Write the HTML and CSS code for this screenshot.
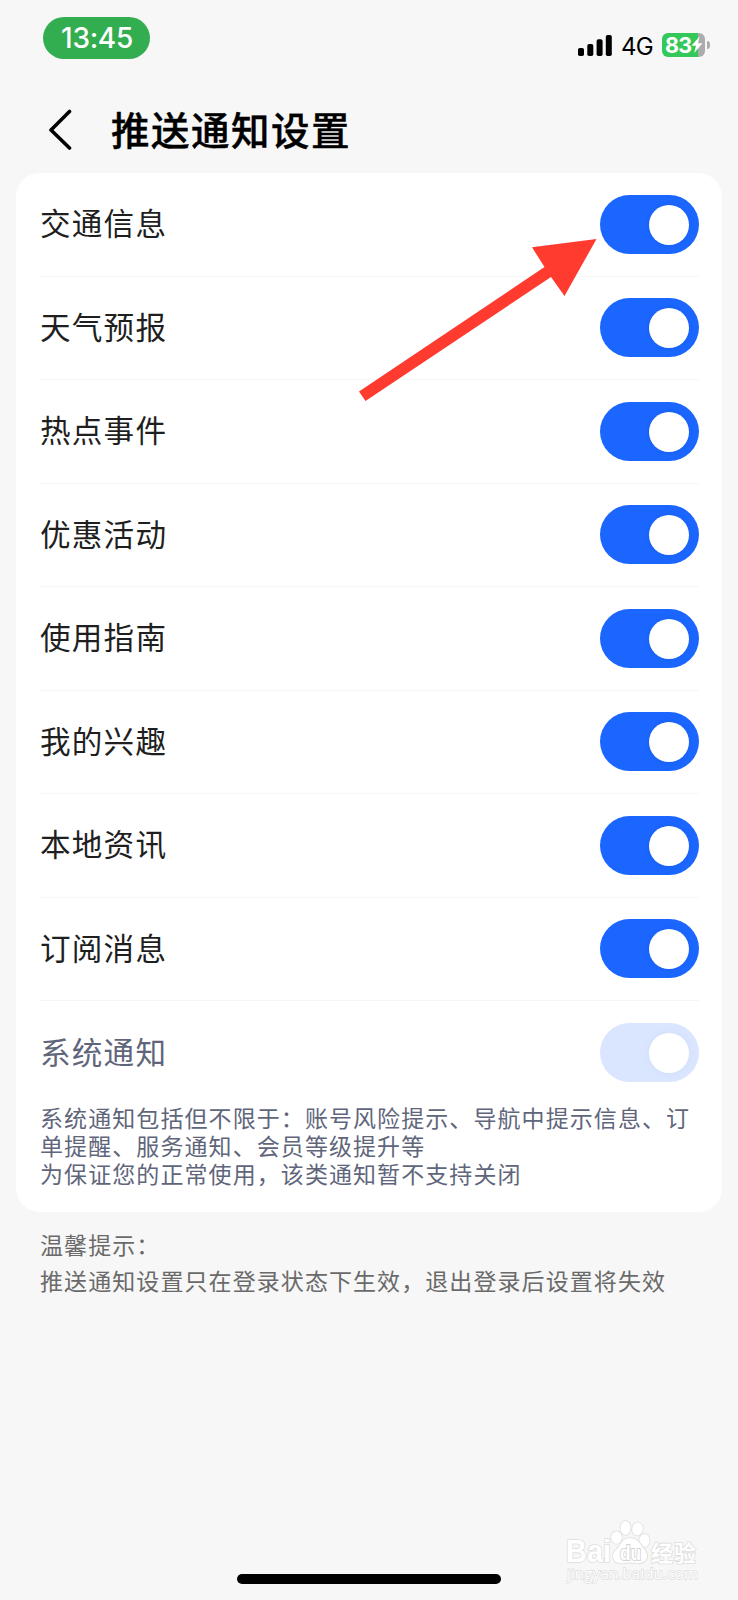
FILE: index.html
```html
<!DOCTYPE html>
<html lang="zh-CN">
<head>
    <meta charset="UTF-8">
    <meta name="viewport" content="width=device-width, initial-scale=1.0">
    <title>推送通知设置</title>
    <link rel="stylesheet" href="styles.css">
</head>
<body>
    <div class="status-bar">
        <div class="time">13:45</div>
        <div class="status-right">
            <svg class="signal" width="34" height="22" viewBox="0 0 34 22">
                <rect x="0" y="13" width="6" height="8" rx="1.8"/>
                <rect x="9.3" y="9" width="6" height="12" rx="1.8"/>
                <rect x="18.6" y="4.3" width="6" height="16.7" rx="1.8"/>
                <rect x="27.8" y="0" width="6" height="21" rx="1.8"/>
            </svg>
            <span class="network">4G</span>
            <div class="battery">
                <span class="battery-level">83</span>
                <svg class="bolt" width="12" height="18" viewBox="0 0 12 18">
                    <path d="M8.5 0.5 L0.5 9.7 H5 L3.2 17 L11.5 7.3 H7 Z"/>
                </svg>
            </div>
            <div class="battery-cap"></div>
        </div>
    </div>

    <div class="header">
        <svg class="back" width="24" height="42" viewBox="0 0 24 42">
            <path d="M21.5 2.5 L3 21 L21.5 39"/>
        </svg>
        <h1>推送通知设置</h1>
    </div>

    <!-- Notification list -->
    <div class="card">
        <div class="row"><span>交通信息</span><div class="switch"></div></div>
        <div class="row"><span>天气预报</span><div class="switch"></div></div>
        <div class="row"><span>热点事件</span><div class="switch"></div></div>
        <div class="row"><span>优惠活动</span><div class="switch"></div></div>
        <div class="row"><span>使用指南</span><div class="switch"></div></div>
        <div class="row"><span>我的兴趣</span><div class="switch"></div></div>
        <div class="row"><span>本地资讯</span><div class="switch"></div></div>
        <div class="row"><span>订阅消息</span><div class="switch"></div></div>
        <div class="row disabled"><span>系统通知</span><div class="switch"></div></div>
        <p class="desc">系统通知包括但不限于：账号风险提示、导航中提示信息、订单提醒、服务通知、会员等级提升等<br>为保证您的正常使用，该类通知暂不支持关闭</p>
    </div>

    <p class="tips">温馨提示：<br>推送通知设置只在登录状态下生效，退出登录后设置将失效</p>

    <!-- Arrow over the list -->
    <svg class="arrow" width="240" height="164" viewBox="0 0 240 164">
        <path d="M238.5 1 L174 9.3 L186.5 29 L1 153.5 L7.5 163 L193 39 L206.5 58 Z"/>
    </svg>

    <!-- Watermark -->
    <svg class="watermark" width="140" height="68" viewBox="0 0 140 68">
        <g class="mark">
            <text class="bai" x="0" y="45" textLength="45" lengthAdjust="spacingAndGlyphs">Bai</text>
            <ellipse cx="50.5" cy="20.5" rx="5.3" ry="6.3"/>
            <ellipse cx="59.5" cy="11" rx="5" ry="7"/>
            <ellipse cx="71.5" cy="12" rx="5.3" ry="6.6" transform="rotate(10 71.5 12)"/>
            <ellipse cx="78.5" cy="23.5" rx="5.2" ry="6.4"/>
            <path d="M64 21 C56 21 55 28 50 33 C44 39 48 46.5 55 46 C61 45.5 66 45.5 72 46 C80 47 84 39 79 33 C74 28 73 21 64 21 Z"/>
            <text class="du" x="54" y="42.5" textLength="21" lengthAdjust="spacingAndGlyphs">du</text>
            <text class="jy" x="85" y="43.5" textLength="45">经验</text>
            <text class="url" x="1" y="62" textLength="131" lengthAdjust="spacingAndGlyphs">jingyan.baidu.com</text>
        </g>
    </svg>

    <div class="home-bar"></div>
</body>
</html>
```

FILE: styles.css
```css
* {
    box-sizing: border-box;
}

body {
    position: relative;
    display: flex;
    flex-direction: column;
    margin: 0;
    height: 1600px;
    overflow: hidden;
    font-family: "Noto Sans CJK SC", sans-serif;
    background: #f7f7f7;
    color: #1f1f1f;
}

.status-bar {
    display: flex;
    justify-content: space-between;
    align-items: flex-start;
    height: 87px;
    padding: 17px 28px 0 43px;
    font-family: Inter, sans-serif;
}

.time {
    width: 107px;
    height: 42px;
    padding-left: 1px;
    border-radius: 21px;
    background: #32ad4f;
    color: #fff;
    font-size: 28px;
    font-weight: 450;
    letter-spacing: -0.3px;
    line-height: 42px;
    text-align: center;
}

.status-right {
    display: flex;
    align-items: center;
    height: 24px;
    margin-top: 16px;
}

.signal {
    margin-top: 2px;
}

.network {
    width: 32px;
    margin: 2px 9px 0 9px;
    color: #000;
    font-size: 24px;
    letter-spacing: -0.7px;
    white-space: nowrap;
}

.battery {
    display: flex;
    align-items: center;
    width: 43px;
    height: 24px;
    padding-left: 3px;
    border-radius: 6px;
    background: linear-gradient(to right, #34c759 36px, #acacae 36px);
    color: #fff;
}

.battery-level {
    width: 26px;
    font-size: 21.5px;
    font-weight: 700;
    letter-spacing: -0.8px;
}

.bolt {
    flex: none;
    fill: #fff;
}

.battery-cap {
    width: 3px;
    height: 8px;
    margin-left: 2px;
    border-radius: 0 4px 4px 0;
    background: #acacae;
}

.header {
    display: flex;
    align-items: center;
    height: 86px;
    padding-left: 48px;
}

.back {
    fill: none;
    stroke: #000;
    stroke-width: 3.6;
    stroke-linecap: round;
    stroke-linejoin: round;
}

.header h1 {
    margin: 0 0 0 39px;
    padding-bottom: 4px;
    color: #000;
    font-size: 38.5px;
    font-weight: 500;
    letter-spacing: 1.5px;
    line-height: 56px;
    -webkit-text-stroke: 0.4px #000;
}

.card {
    height: 1039px;
    margin: 0 16px;
    padding: 0 23px 0 24px;
    border-radius: 24px;
    background: #fff;
}

.row {
    display: flex;
    justify-content: space-between;
    align-items: center;
    height: 103.5px;
    border-bottom: 1px solid #f6f6f6;
    font-size: 30.6px;
    letter-spacing: 1.2px;
    line-height: 44px;
}

.row span {
    padding-bottom: 4px;
}

.switch {
    width: 99px;
    height: 59px;
    padding: 10px;
    border-radius: 30px;
    background: #1b66ff;
}

.switch::after {
    content: "";
    display: block;
    width: 40px;
    height: 40px;
    margin-left: auto;
    border-radius: 50%;
    background: #fff;
    box-shadow: 0 0 5px rgba(0, 0, 60, 0.08);
}

.row.disabled {
    border-bottom: none;
    color: #5f667b;
}

.disabled .switch {
    background: #dae5ff;
}

.disabled .switch::after {
    box-shadow: 0 0 8px rgba(0, 0, 60, 0.04);
}

.desc {
    margin: -2px 0 0;
    color: #5f667b;
    font-size: 23px;
    letter-spacing: 1.08px;
    line-height: 28.3px;
}

.tips {
    margin: 15px 40px 0;
    color: #6a6a6a;
    font-size: 23px;
    letter-spacing: 1.08px;
    line-height: 35.5px;
}

.arrow {
    position: absolute;
    left: 358px;
    top: 238px;
    fill: #ff3b30;
}

.watermark {
    position: absolute;
    left: 566px;
    top: 1517px;
}

.mark {
    fill: #fff;
    stroke: #dedede;
    stroke-width: 1.6;
    paint-order: stroke;
    font-family: "Liberation Sans", sans-serif;
}

.bai {
    font-size: 31px;
    font-weight: 700;
}

.du {
    fill: #fff;
    stroke: #d4d4d4;
    stroke-width: 2;
    font-size: 20px;
    font-weight: 700;
}

.jy {
    font-family: "Noto Sans CJK SC", sans-serif;
    font-size: 22px;
    font-weight: 700;
}

.url {
    stroke-width: 1.4;
    font-family: "Open Sans", sans-serif;
    font-size: 15px;
}

.home-bar {
    width: 264px;
    height: 10px;
    margin: auto auto 16px;
    border-radius: 5px;
    background: #000;
}
```
